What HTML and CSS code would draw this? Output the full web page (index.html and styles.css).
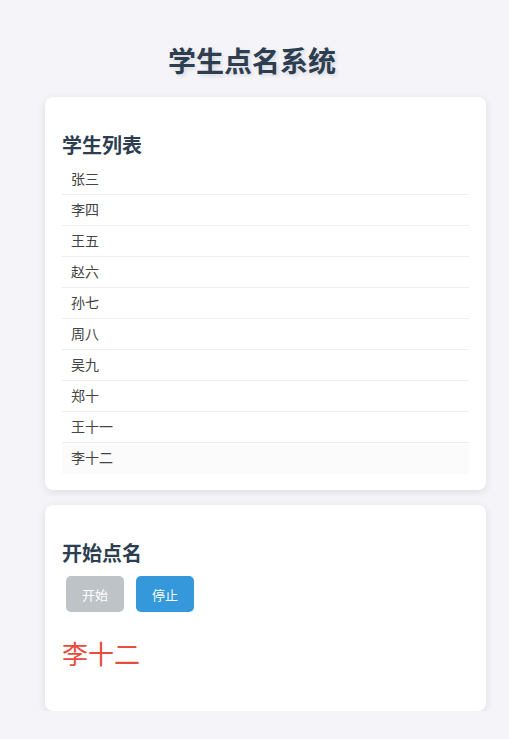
FILE: index.html
```html
<!DOCTYPE html>
<html lang="zh-CN">
<head>
<meta charset="UTF-8">
<title>学生点名系统</title>
<link rel="stylesheet" href="styles.css">
</head>
<body>
<h1 class="title">学生点名系统</h1>
<main class="container">
  <section class="card">
    <h2 class="card-title">学生列表</h2>
    <ul class="student-list">
      <li class="student">张三</li>
      <li class="student">李四</li>
      <li class="student">王五</li>
      <li class="student">赵六</li>
      <li class="student">孙七</li>
      <li class="student">周八</li>
      <li class="student">吴九</li>
      <li class="student">郑十</li>
      <li class="student">王十一</li>
      <li class="student student-picked">李十二</li>
    </ul>
  </section>
  <section class="card">
    <h2 class="card-title">开始点名</h2>
    <div class="controls">
      <button class="btn btn-start" disabled>开始</button>
      <button class="btn btn-stop">停止</button>
    </div>
    <div class="result">李十二</div>
  </section>
</main>
</body>
</html>
```

FILE: styles.css
```css
html, body {
  margin: 0;
  padding: 0;
}
body {
  background: #f4f4f9;
  font-family: "Noto Sans CJK SC", "Noto Sans", sans-serif;
  color: #333;
  padding-top: 40px;
}
.title {
  margin: 0 0 17px;
  padding-right: 5px;
  text-align: center;
  font-size: 28px;
  line-height: 40px;
  font-weight: 700;
  color: #2c3e50;
  text-shadow: 2px 2px 4px rgba(0, 0, 0, 0.12);
}
.container {
  margin: 0 23px 0 45px;
  display: flex;
  flex-direction: column;
  gap: 15px;
}
.card {
  background: #fff;
  border-radius: 8px;
  box-shadow: 0 2px 8px rgba(0, 0, 0, 0.1);
  padding: 17px 17px 16px;
}
.card-title {
  margin: 16px 0 5px;
  font-size: 20px;
  line-height: 29px;
  font-weight: 700;
  color: #2c3e50;
}
.student-list {
  list-style: none;
  margin: 0;
  padding: 0;
}
.student {
  height: 31px;
  line-height: 29px;
  padding: 0 9px;
  font-size: 14px;
  color: #444;
  border-bottom: 1px solid #eee;
  box-sizing: border-box;
}
.student-picked {
  border-bottom: none;
  background: #fbfbfb;
}
.controls {
  display: flex;
  gap: 12px;
  padding: 4px 4px 0;
}
.btn {
  border: none;
  border-radius: 5px;
  height: 36px;
  padding: 0 16px;
  font-family: inherit;
  font-size: 13px;
  color: #fff;
  cursor: pointer;
}
.btn-start {
  background: #bdc3c7;
}
.btn-stop {
  background: #3498db;
}
.result {
  margin: 22px 0 23px;
  font-size: 26px;
  line-height: 38px;
  color: #e74c3c;
}
```
